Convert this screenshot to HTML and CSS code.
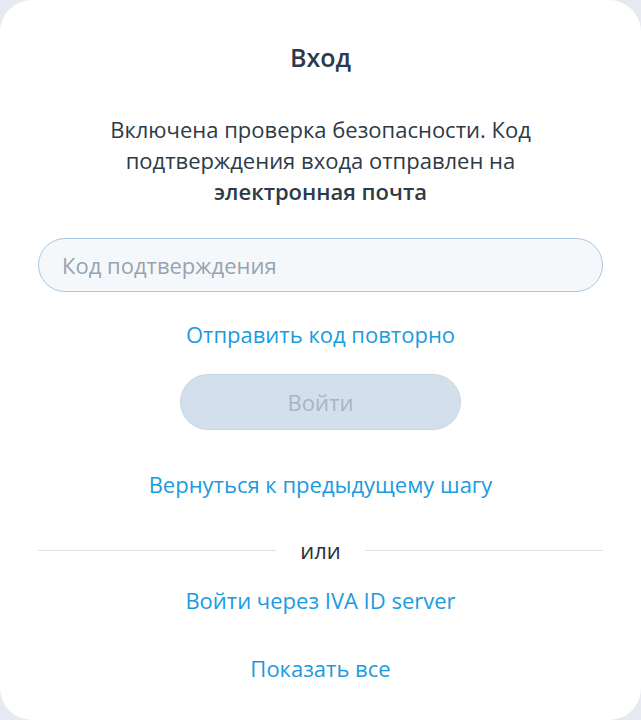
FILE: index.html
```html
<!DOCTYPE html>
<html lang="ru">
<head>
<meta charset="utf-8">
<title>Вход</title>
<link rel="stylesheet" href="styles.css">
</head>
<body>
<main class="card">
  <h1 class="title">Вход</h1>
  <p class="info">Включена проверка безопасности. Код подтверждения входа отправлен на <b>электронная почта</b></p>
  <input class="code" type="text" placeholder="Код подтверждения">
  <a class="link resend" href="#">Отправить код повторно</a>
  <button class="submit" disabled>Войти</button>
  <a class="link back" href="#">Вернуться к предыдущему шагу</a>
  <div class="divider"><span class="line"></span><span class="or">или</span><span class="line"></span></div>
  <a class="link sso" href="#">Войти через IVA ID server</a>
  <a class="link all" href="#">Показать все</a>
</main>
</body>
</html>
```

FILE: styles.css
```css
html, body {
  margin: 0;
  padding: 0;
  background: #e6eaf0;
  font-family: "Open Sans", "Noto Sans", sans-serif;
}
.card {
  box-sizing: border-box;
  width: 641px;
  height: 720px;
  background: #ffffff;
  border-radius: 32px;
  padding: 42px 38px 0;
  display: flex;
  flex-direction: column;
  align-items: center;
}
.title {
  margin: 0;
  font-size: 25px;
  line-height: 30px;
  font-weight: 600;
  color: #2b3a4c;
}
.info {
  margin: 42px 0 0;
  width: 480px;
  text-align: center;
  font-size: 22px;
  line-height: 31px;
  color: #2d3a48;
}
.info b {
  font-weight: 600;
}
.code {
  box-sizing: border-box;
  margin-top: 31px;
  width: 565px;
  height: 54px;
  border: 1.5px solid #a8c7e1;
  border-radius: 27px;
  background: #f5f8fb;
  padding: 0 23px;
  font-family: inherit;
  font-size: 22px;
  color: #2f3b48;
  outline: none;
}
.code::placeholder {
  color: #97a3b0;
}
.link {
  display: block;
  text-decoration: none;
  color: #1a9be0;
  font-size: 22px;
  line-height: 28px;
}
.resend { margin-top: 28px; }
.submit {
  box-sizing: border-box;
  margin-top: 26px;
  width: 281px;
  height: 56px;
  border: 1.5px solid #c6d6e5;
  border-radius: 28px;
  background: #d3e0ec;
  color: #a6b5c5;
  font-family: inherit;
  font-size: 22px;
}
.back { margin-top: 40px; }
.divider {
  margin-top: 38px;
  width: 565px;
  display: flex;
  align-items: center;
  gap: 24px;
}
.line {
  flex: 1;
  height: 1px;
  background: #dfe1e4;
}
.or {
  font-size: 22px;
  line-height: 28px;
  color: #2b2f36;
}
.sso { margin-top: 22px; }
.all { margin-top: 40px; }
```
